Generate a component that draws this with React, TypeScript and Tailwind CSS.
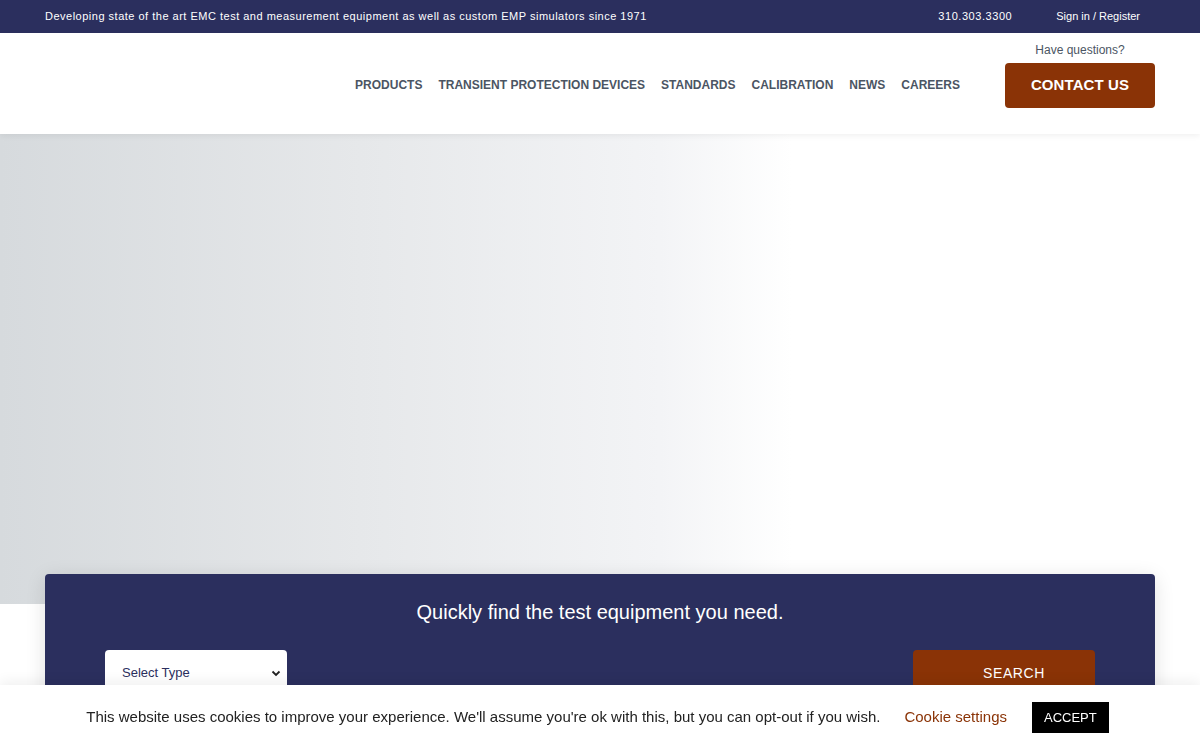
import React from 'react'

const navLinks = ['PRODUCTS', 'TRANSIENT PROTECTION DEVICES', 'STANDARDS', 'CALIBRATION', 'NEWS', 'CAREERS']

function TopBar() {
  return (
    <div className="h-[33px] bg-[#2b2f5e] text-white flex items-center justify-between pl-[45px] pr-[60px] text-[11px]">
      <span className="tracking-[0.5px]">Developing state of the art EMC test and measurement equipment as well as custom EMP simulators since 1971</span>
      <div className="flex items-center">
        <span className="mr-[44px] tracking-[0.55px]">310.303.3300</span>
        <span>Sign in / Register</span>
      </div>
    </div>
  )
}

function Header() {
  return (
    <header className="relative z-10 h-[101px] bg-white shadow-[0_2px_6px_rgba(0,0,0,0.06)] flex items-start justify-end pr-[45px]">
      <nav className="flex gap-[16px] mt-[43px] mr-[45px] text-[12px] font-bold text-[#4b5563]">
        {navLinks.map((l) => (
          <a key={l} href="#" className="whitespace-nowrap">{l}</a>
        ))}
      </nav>
      <div className="flex flex-col items-center w-[150px]">
        <span className="mt-[9px] text-[12px] text-[#4b5563] leading-[16px]">Have questions?</span>
        <a href="#" className="mt-[5px] w-[150px] h-[45px] rounded-[4px] bg-[#8a3306] text-white font-bold text-[15px] tracking-[0.1px] flex items-center justify-center">
          CONTACT US
        </a>
      </div>
    </header>
  )
}

function SearchPanel() {
  return (
    <div className="relative mx-[45px] -mt-[30px] bg-[#2b2f5e] rounded-t-[4px] shadow-[0_4px_20px_rgba(0,0,0,0.12)] pb-[40px]">
      <h2 className="pt-[24px] text-center text-white text-[20px] leading-[28px]">Quickly find the test equipment you need.</h2>
      <div className="mt-[24px] flex justify-between px-[60px]">
        <div className="w-[182px] h-[46px] bg-white rounded-[4px] flex items-center justify-between pl-[17px] pr-[6px] text-[13px] text-[#2b2f5e]">
          <span>Select Type</span>
          <svg width="10" height="10" viewBox="0 0 10 10"><path d="M1.5 3.5 5 7l3.5-3.5" fill="none" stroke="#222" strokeWidth="1.8" /></svg>
        </div>
        <button className="w-[182px] h-[46px] bg-[#8a3306] rounded-[4px] pl-[20px] text-white text-[14px] tracking-[0.6px]">SEARCH</button>
      </div>
    </div>
  )
}

function CookieBar() {
  return (
    <div className="fixed bottom-0 left-0 right-0 h-[65px] bg-white shadow-[0_-4px_12px_rgba(0,0,0,0.06)] flex items-center justify-center pr-[5px] text-[15px] text-[#222]">
      <span>This website uses cookies to improve your experience. We'll assume you're ok with this, but you can opt-out if you wish.</span>
      <a href="#" className="ml-[24px] text-[#8a3306]">Cookie settings</a>
      <button className="ml-[25px] h-[31px] px-[12px] bg-black text-white text-[13px]">ACCEPT</button>
    </div>
  )
}

export default function App() {
  return (
    <div className="min-h-[750px] bg-white font-['Liberation_Sans',Arial,sans-serif]">
      <TopBar />
      <Header />
      <section className="h-[470px] bg-[linear-gradient(to_right,#d6dadd_0%,#e6e8ea_30%,#f3f4f6_55%,#ffffff_66%)]" />
      <SearchPanel />
      <CookieBar />
    </div>
  )
}
